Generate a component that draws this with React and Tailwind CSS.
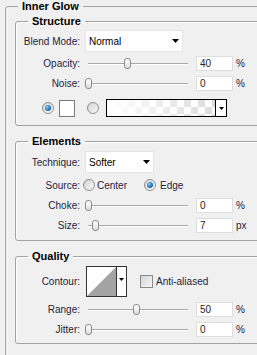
import React from "react";

const label = "w-[64px] shrink-0 text-right text-[10px] text-[#1c2340]";

function Radio({ on }) {
  return (
    <span className="flex h-[12px] w-[12px] shrink-0 items-center justify-center rounded-full border border-[#8e8f8f] bg-[linear-gradient(135deg,#d2d2d2,#fafafa)]">
      {on && (
        <span className="h-[6px] w-[6px] rounded-full bg-[radial-gradient(circle_at_35%_35%,#8fd0f5,#1f74b8_55%,#0c4478)]" />
      )}
    </span>
  );
}

function Arrow() {
  return (
    <svg width="7" height="4" viewBox="0 0 7 4">
      <path d="M0 0h7L3.5 4z" fill="#000" />
    </svg>
  );
}

function Slider({ thumb }) {
  // thumb = left offset of the knob inside the 108px slider area
  return (
    <div className="relative ml-[4px] h-full w-[108px] shrink-0">
      <div className="absolute left-[4px] right-[4px] top-[7px] h-[2px] border-t border-[#a9a9a9] bg-white" />
      <div
        className="absolute top-[2px] h-[11px] w-[7px] rounded-[3px] border border-[#8a8a8a] bg-[linear-gradient(#ffffff,#dedede)]"
        style={{ left: thumb }}
      />
    </div>
  );
}

function Field({ value, unit }) {
  return (
    <>
      <div className="ml-[4px] flex h-[15px] w-[37px] shrink-0 items-center border border-[#dedede] bg-white pl-[3px] text-[10px] text-[#2a2218]">
        {value}
      </div>
      <span className="ml-[3px] text-[10px] text-[#1c2340]">{unit}</span>
    </>
  );
}

function SliderRow({ name, thumb, value, unit = "%", mt }) {
  return (
    <div className={`flex h-[15px] items-center ${mt}`}>
      <span className={label}>{name}</span>
      <Slider thumb={thumb} />
      <Field value={value} unit={unit} />
    </div>
  );
}

function Group({ title, mt, pb, children }) {
  return (
    <fieldset
      className={`w-[290px] rounded-[3px] border border-[#a3a3a3] px-0 pt-0 shadow-[inset_1px_1px_0_#fff] ${mt} ${pb}`}
    >
      <legend className="ml-[12px] px-[4px] text-[11px] font-bold leading-[13px] text-black">
        {title}
      </legend>
      {children}
    </fieldset>
  );
}

export default function App() {
  return (
    <div className="h-[355px] w-[257px] overflow-hidden bg-[#f0f0f0] font-['Liberation_Sans',Arial,sans-serif]">
      <fieldset className="ml-[5px] w-[310px] rounded-[3px] border border-[#a3a3a3] pb-[20px] pl-[9px] pt-0">
        <legend className="ml-[3px] px-[4px] text-[11px] font-bold leading-[13px] text-black">
          Inner Glow
        </legend>

        <Group title="Structure" mt="mt-[2px]" pb="pb-[8px]">
          <div className="mt-[2px] flex h-[22px] items-center">
            <span className={label}>Blend Mode:</span>
            <div className="ml-[5px] flex h-[22px] w-[98px] items-center justify-between border border-[#e4e4e4] bg-white pl-[3px] pr-[3px] text-[10px] text-black">
              Normal
              <Arrow />
            </div>
          </div>
          <SliderRow name="Opacity:" thumb={40} value="40" mt="mt-[4px]" />
          <SliderRow name="Noise:" thumb={1} value="0" mt="mt-[5px]" />
          <div className="mt-[8px] flex h-[18px] items-center">
            <span className="ml-[26px]">
              <Radio on />
            </span>
            <div className="ml-[5px] h-[17px] w-[16px] border border-[#7a7a7a] bg-white" />
            <span className="ml-[12px]">
              <Radio />
            </span>
            <div className="ml-[7px] flex h-[18px] w-[121px] border border-black">
              <div className="h-full flex-1 bg-[repeating-conic-gradient(#dcdcdc_0_25%,#ffffff_0_50%)] bg-[length:14px_14px]">
                <div className="h-full w-full bg-[linear-gradient(to_right,#ffffff,rgba(255,255,255,0))]" />
              </div>
              <div className="flex w-[11px] items-center justify-center border-l border-black bg-white">
                <svg width="5" height="3" viewBox="0 0 5 3">
                  <path d="M0 0h5L2.5 3z" fill="#000" />
                </svg>
              </div>
            </div>
          </div>
        </Group>

        <Group title="Elements" mt="mt-[9px]" pb="pb-[7px]">
          <div className="mt-[3px] flex h-[22px] items-center">
            <span className={label}>Technique:</span>
            <div className="ml-[5px] flex h-[22px] w-[69px] items-center justify-between border border-[#e4e4e4] bg-white pl-[3px] pr-[3px] text-[10px] text-black">
              Softer
              <Arrow />
            </div>
          </div>
          <div className="mt-[6px] flex h-[12px] items-center">
            <span className={label}>Source:</span>
            <span className="ml-[3px]">
              <Radio />
            </span>
            <span className="ml-[2px] w-[47px] text-[10px] text-[#1c2340]">Center</span>
            <Radio on />
            <span className="ml-[4px] text-[10px] text-[#1c2340]">Edge</span>
          </div>
          <SliderRow name="Choke:" thumb={1} value="0" mt="mt-[7px]" />
          <SliderRow name="Size:" thumb={8} value="7" unit="px" mt="mt-[5px]" />
        </Group>

        <Group title="Quality" mt="mt-[9px]" pb="pb-[6px]">
          <div className="mt-[3px] flex h-[31px] items-center">
            <span className={label}>Contour:</span>
            <div className="ml-[6px] flex h-[31px] w-[41px] border border-[#333] bg-white">
              <svg width="29" height="29" viewBox="0 0 29 29" className="shrink-0">
                <rect width="29" height="29" fill="#fff" />
                <path d="M0 29L29 0V29z" fill="#a3a3a3" />
              </svg>
              <div className="flex flex-1 items-center justify-center border-l border-[#333] bg-white pb-[4px]">
                <svg width="5" height="3" viewBox="0 0 5 3">
                  <path d="M0 0h5L2.5 3z" fill="#000" />
                </svg>
              </div>
            </div>
            <span className="ml-[13px] h-[13px] w-[13px] border border-[#8a8a8a] bg-[linear-gradient(135deg,#d4d4d4,#f8f8f8)]" />
            <span className="ml-[3px] text-[10px] text-[#1c2340]">Anti-aliased</span>
          </div>
          <SliderRow name="Range:" thumb={49} value="50" mt="mt-[5px]" />
          <SliderRow name="Jitter:" thumb={1} value="0" mt="mt-[5px]" />
        </Group>
      </fieldset>
    </div>
  );
}
